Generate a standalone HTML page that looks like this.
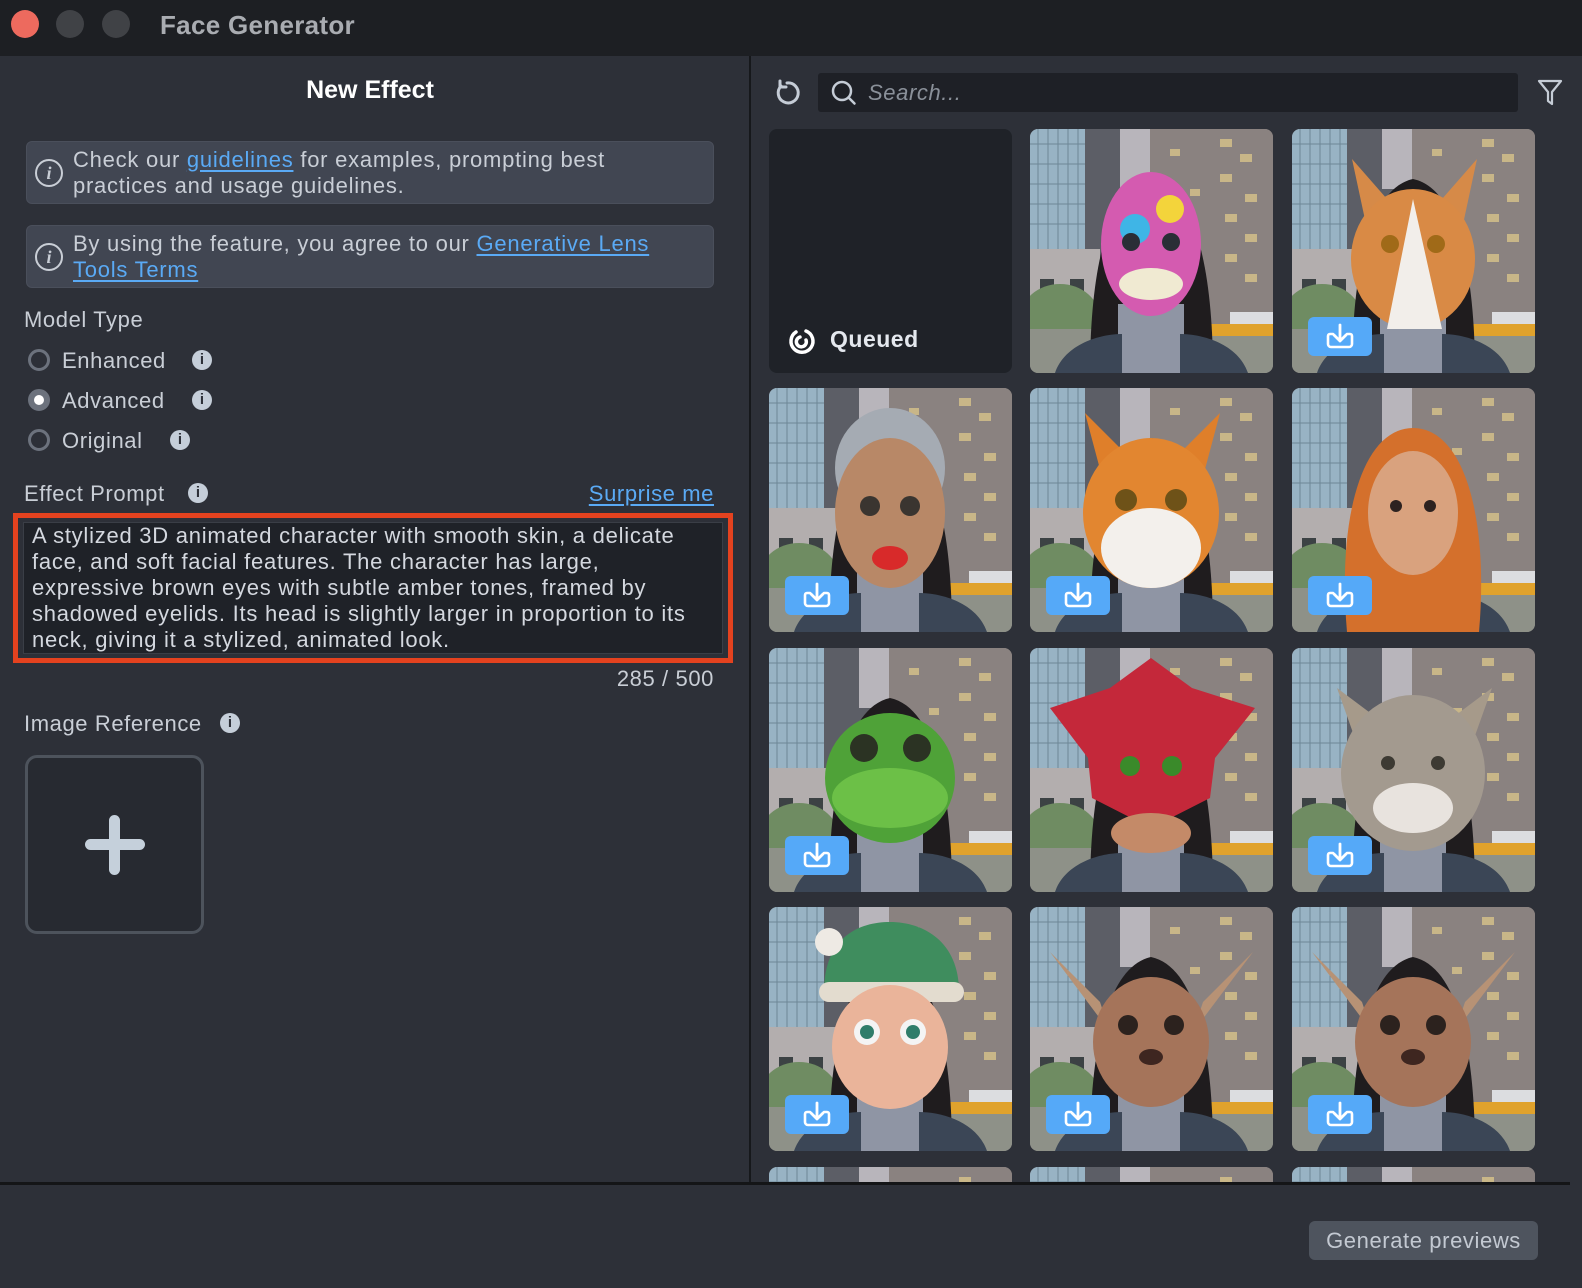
<!DOCTYPE html>
<html><head><meta charset="utf-8">
<style>
*{margin:0;padding:0;box-sizing:border-box}
html,body{width:1582px;height:1288px;overflow:hidden;background:#2d3038;font-family:"Liberation Sans",sans-serif;color:#c9ced6;position:relative}
.abs{position:absolute}
.title{left:0;top:0;width:1582px;height:56px;background:#1d1f23}
.dot{width:28px;height:28px;border-radius:50%;top:10px}
.left{left:0;top:56px;width:749px;height:1127px;background:#2d3038}
.div{left:749px;top:56px;width:2px;height:1127px;background:#16181b}
.hsep{left:0;top:1182px;width:1570px;height:3px;background:#141517}
.info{left:26px;width:688px;height:63px;background:#414652;border-radius:6px;border:1px solid #4a4f5b}
.info .t{position:absolute;left:46px;top:5px;font-size:22px;letter-spacing:0.75px;line-height:26px;color:#c9ced6;white-space:nowrap}
.info .i{position:absolute;left:8px;top:17px;width:28px;height:28px;border:2px solid #c9ced6;border-radius:50%;font-family:"Liberation Serif",serif;font-style:italic;font-weight:bold;font-size:18px;text-align:center;line-height:24px;color:#c9ced6}
a{color:#5aaaf5;text-decoration:underline;text-underline-offset:3px}
.lbl{font-size:22px;letter-spacing:0.6px;color:#c9ced6;white-space:nowrap}
.radio{width:22px;height:22px;border-radius:50%;border:3px solid #6c727d}
.ii{width:20px;height:20px;border-radius:50%;background:#c5ced9;color:#2d3038;font-weight:bold;font-size:15px;text-align:center;line-height:20px}
.tile{width:243px;height:244px;border-radius:8px;overflow:hidden}
.dl{position:absolute;left:16px;top:188px;width:64px;height:39px;background:#55a9f8;border-radius:6px}
</style></head><body>
<svg width="0" height="0" style="position:absolute">
<defs>
<symbol id="bg" viewBox="0 0 243 244">
<rect width="243" height="244" fill="#7d7a7a"/>
<rect x="0" y="0" width="65" height="120" fill="#98b3c4"/>
<g stroke="#6e8796" stroke-width="1">
<path d="M8 0V120M18 0V120M28 0V120M38 0V120M48 0V120M58 0V120M0 15H65M0 35H65M0 55H65M0 75H65M0 95H65"/>
</g>
<rect x="55" y="0" width="60" height="160" fill="#5c5e66"/>
<rect x="90" y="0" width="30" height="60" fill="#b8b5bb"/>
<rect x="120" y="0" width="123" height="200" fill="#8a8280"/>
<g fill="#d8c48a" opacity=".8">
<rect x="190" y="10" width="12" height="8"/><rect x="210" y="25" width="12" height="8"/><rect x="190" y="45" width="12" height="8"/><rect x="215" y="65" width="12" height="8"/><rect x="195" y="85" width="12" height="8"/><rect x="215" y="105" width="12" height="8"/><rect x="195" y="125" width="12" height="8"/><rect x="215" y="145" width="12" height="8"/><rect x="140" y="20" width="10" height="7"/><rect x="160" y="60" width="10" height="7"/><rect x="150" y="110" width="10" height="7"/>
</g>
<rect x="0" y="120" width="70" height="80" fill="#b3aeae"/>
<rect x="10" y="150" width="14" height="20" fill="#3c4244"/><rect x="40" y="150" width="14" height="20" fill="#3c4244"/>
<ellipse cx="30" cy="190" rx="40" ry="35" fill="#6f8c62"/>
<rect x="0" y="200" width="243" height="44" fill="#8e9188"/>
<rect x="170" y="195" width="73" height="12" fill="#e0a22c"/>
<rect x="200" y="183" width="43" height="12" fill="#dcdde0"/>
<path d="M60 244 C60 150 75 60 121 50 C168 60 183 150 183 244Z" fill="#1f1c1e"/>
<rect x="88" y="175" width="66" height="69" fill="#8f95a4"/>
<path d="M25 244 C35 215 70 205 92 205 L92 244Z M218 244 C208 215 173 205 150 205 L150 244Z" fill="#3b4656"/>
</symbol>
<symbol id="dlic" viewBox="0 0 64 39">
<path d="M25 17h-3a2 2 0 0 0-2 2v8a3 3 0 0 0 3 3h18a3 3 0 0 0 3-3v-8a2 2 0 0 0-2-2h-3" fill="none" stroke="#fff" stroke-width="2.6" stroke-linecap="round"/>
<path d="M32 8v15M26 18l6 6 6-6" fill="none" stroke="#fff" stroke-width="2.8" stroke-linecap="round" stroke-linejoin="round"/>
</symbol>
</defs>
</svg>

<div class="abs title"></div>
<div class="abs dot" style="left:11px;background:#ed6a5e"></div>
<div class="abs dot" style="left:56px;background:#404246"></div>
<div class="abs dot" style="left:102px;background:#404246"></div>
<div class="abs" style="left:160px;top:10px;font-size:26px;font-weight:bold;letter-spacing:0.3px;color:#a9acb1">Face Generator</div>

<div class="abs left"></div>
<div class="abs div"></div>

<div class="abs" style="left:0;top:76px;width:740px;text-align:center;font-size:25px;font-weight:bold;color:#fff">New Effect</div>

<div class="abs info" style="top:141px"><div class="i">i</div><div class="t">Check our <a>guidelines</a> for examples, prompting best<br>practices and usage guidelines.</div></div>
<div class="abs info" style="top:225px"><div class="i">i</div><div class="t">By using the feature, you agree to our <a>Generative Lens<br>Tools Terms</a></div></div>

<div class="abs lbl" style="left:24px;top:307px">Model Type</div>
<div class="abs radio" style="left:28px;top:349px"></div>
<div class="abs lbl" style="left:62px;top:348px">Enhanced</div>
<div class="abs ii" style="left:192px;top:350px">i</div>
<div class="abs radio" style="left:28px;top:389px;background:#fff;border:6px solid #6c727d"></div>
<div class="abs lbl" style="left:62px;top:388px">Advanced</div>
<div class="abs ii" style="left:192px;top:390px">i</div>
<div class="abs radio" style="left:28px;top:429px"></div>
<div class="abs lbl" style="left:62px;top:428px">Original</div>
<div class="abs ii" style="left:170px;top:430px">i</div>

<div class="abs lbl" style="left:24px;top:481px">Effect Prompt</div>
<div class="abs ii" style="left:188px;top:483px">i</div>
<div class="abs lbl" style="right:868px;top:481px"><a>Surprise me</a></div>

<div class="abs" style="left:13px;top:513px;width:720px;height:150px;border:5px solid #e4421f;background:#2d3038">
<div style="position:absolute;left:5px;top:4px;width:700px;height:132px;background:#1f2228;border:1px solid #3a3e46"></div>
<div style="position:absolute;left:14px;top:5px;font-size:22px;letter-spacing:0.75px;line-height:26px;color:#d4d8df;white-space:nowrap">A stylized 3D animated character with smooth skin, a delicate<br>face, and soft facial features. The character has large,<br>expressive brown eyes with subtle amber tones, framed by<br>shadowed eyelids. Its head is slightly larger in proportion to its<br>neck, giving it a stylized, animated look.</div>
</div>
<div class="abs lbl" style="right:868px;top:666px">285 / 500</div>

<div class="abs lbl" style="left:24px;top:711px">Image Reference</div>
<div class="abs ii" style="left:220px;top:713px">i</div>
<div class="abs" style="left:25px;top:755px;width:179px;height:179px;border:3px solid #4d535c;border-radius:12px;background:#272a31"></div>
<div class="abs" style="left:85px;top:839px;width:60px;height:11px;border-radius:6px;background:#c5d0db"></div>
<div class="abs" style="left:109px;top:815px;width:11px;height:60px;border-radius:6px;background:#c5d0db"></div>

<svg class="abs" style="left:772px;top:78px" width="30" height="30" viewBox="0 0 30 30"><path d="M9 8 A10 10 0 1 0 15 5" fill="none" stroke="#c5ccd6" stroke-width="3" stroke-linecap="round"/><path d="M8 3v6h6" fill="none" stroke="#c5ccd6" stroke-width="3" stroke-linecap="round" stroke-linejoin="round"/></svg>
<div class="abs" style="left:818px;top:73px;width:700px;height:39px;background:#1e2026;border-radius:3px"></div>
<svg class="abs" style="left:830px;top:79px" width="28" height="28" viewBox="0 0 28 28"><circle cx="12" cy="12" r="9" fill="none" stroke="#c5ccd6" stroke-width="2.5"/><path d="M18.5 18.5l6 6" stroke="#c5ccd6" stroke-width="2.5" stroke-linecap="round"/></svg>
<div class="abs" style="left:868px;top:80px;font-size:22px;letter-spacing:0.6px;font-style:italic;color:#8a9099">Search...</div>
<svg class="abs" style="left:1536px;top:78px" width="28" height="30" viewBox="0 0 28 30"><path d="M3 3h22l-9 11v12l-4-3v-9z" fill="none" stroke="#c5ccd6" stroke-width="2.2" stroke-linejoin="round"/></svg>

<div class="abs tile" style="left:769px;top:129px;background:#1f2228"></div>
<svg class="abs" style="left:786px;top:326px" width="30" height="30" viewBox="0 0 30 30"><path d="M10 6 A11 11 0 1 0 20 5" fill="none" stroke="#fff" stroke-width="3.5" stroke-linecap="round"/><path d="M14 11 A5 5 0 1 0 20 14" fill="none" stroke="#fff" stroke-width="3.5" stroke-linecap="round"/></svg>
<div class="abs" style="left:830px;top:326px;font-size:23px;font-weight:bold;letter-spacing:0.5px;color:#e4e8ee">Queued</div>

<div class="abs tile" style="left:1030px;top:129px"><svg width="243" height="244"><use href="#bg"/><ellipse cx="121" cy="115" rx="50" ry="72" fill="#d45bb0"/><ellipse cx="105" cy="100" rx="15" ry="15" fill="#3fb5e6"/><ellipse cx="140" cy="80" rx="14" ry="14" fill="#f3d43b"/><ellipse cx="121" cy="155" rx="32" ry="16" fill="#f0ead2"/><circle cx="101" cy="113" r="9" fill="#2a2e36"/><circle cx="141" cy="113" r="9" fill="#2a2e36"/></svg></div>
<div class="abs tile" style="left:1292px;top:129px"><svg width="243" height="244"><use href="#bg"/><path d="M60 30 L75 100 L170 100 L185 30 L150 70 L95 70Z" fill="#d68a48"/><ellipse cx="121" cy="130" rx="62" ry="70" fill="#d98a45"/><path d="M121 70 L95 200 L150 200Z" fill="#f2eeea"/><circle cx="98" cy="115" r="9" fill="#a06a18"/><circle cx="144" cy="115" r="9" fill="#a06a18"/></svg><div class="dl"><svg width="64" height="39"><use href="#dlic"/></svg></div></div>

<div class="abs tile" style="left:769px;top:388px"><svg width="243" height="244"><use href="#bg"/><ellipse cx="121" cy="80" rx="55" ry="60" fill="#a5abb3"/><ellipse cx="121" cy="125" rx="55" ry="75" fill="#b88867"/><circle cx="101" cy="118" r="10" fill="#3a3530"/><circle cx="141" cy="118" r="10" fill="#3a3530"/><ellipse cx="121" cy="170" rx="18" ry="12" fill="#d82a2a"/></svg><div class="dl"><svg width="64" height="39"><use href="#dlic"/></svg></div></div>
<div class="abs tile" style="left:1030px;top:388px"><svg width="243" height="244"><use href="#bg"/><path d="M55 25 L75 100 L170 100 L190 25 L150 65 L95 65Z" fill="#df7f2a"/><ellipse cx="121" cy="125" rx="68" ry="75" fill="#e28630"/><ellipse cx="121" cy="160" rx="50" ry="40" fill="#f3f0ec"/><circle cx="96" cy="112" r="11" fill="#6e5218"/><circle cx="146" cy="112" r="11" fill="#6e5218"/></svg><div class="dl"><svg width="64" height="39"><use href="#dlic"/></svg></div></div>
<div class="abs tile" style="left:1292px;top:388px"><svg width="243" height="244"><use href="#bg"/><path d="M55 244 C45 130 70 40 121 40 C172 40 197 130 187 244Z" fill="#d4702c"/><ellipse cx="121" cy="125" rx="45" ry="62" fill="#d9a27e"/><circle cx="104" cy="118" r="6" fill="#2d2220"/><circle cx="138" cy="118" r="6" fill="#2d2220"/></svg><div class="dl"><svg width="64" height="39"><use href="#dlic"/></svg></div></div>

<div class="abs tile" style="left:769px;top:648px"><svg width="243" height="244"><use href="#bg"/><ellipse cx="121" cy="130" rx="65" ry="65" fill="#4fa238"/><ellipse cx="121" cy="150" rx="58" ry="30" fill="#6cc047"/><circle cx="95" cy="100" r="14" fill="#2b3323"/><circle cx="148" cy="100" r="14" fill="#2b3323"/></svg><div class="dl"><svg width="64" height="39"><use href="#dlic"/></svg></div></div>
<div class="abs tile" style="left:1030px;top:648px"><svg width="243" height="244"><use href="#bg"/><path d="M20 60 L80 40 L121 10 L162 40 L225 60 L185 110 L180 150 L121 180 L62 150 L58 110Z" fill="#c4283a"/><ellipse cx="121" cy="185" rx="40" ry="20" fill="#c48a68"/><circle cx="100" cy="118" r="10" fill="#3a8a2a"/><circle cx="142" cy="118" r="10" fill="#3a8a2a"/></svg></div>
<div class="abs tile" style="left:1292px;top:648px"><svg width="243" height="244"><use href="#bg"/><path d="M45 40 L70 110 L175 110 L200 40 L160 70 L85 70Z" fill="#a69a8a"/><ellipse cx="121" cy="125" rx="72" ry="78" fill="#a39a8f"/><ellipse cx="121" cy="160" rx="40" ry="25" fill="#e8e3de"/><circle cx="96" cy="115" r="7" fill="#3d3a33"/><circle cx="146" cy="115" r="7" fill="#3d3a33"/></svg><div class="dl"><svg width="64" height="39"><use href="#dlic"/></svg></div></div>

<div class="abs tile" style="left:769px;top:907px"><svg width="243" height="244"><use href="#bg"/><path d="M55 85 C55 30 90 15 121 15 C155 15 190 35 190 85Z" fill="#3f8d5e"/><rect x="50" y="75" width="145" height="20" rx="10" fill="#e3dccf"/><circle cx="60" cy="35" r="14" fill="#eeeae4"/><ellipse cx="121" cy="140" rx="58" ry="62" fill="#eab49a"/><circle cx="98" cy="125" r="13" fill="#f4f4f4"/><circle cx="144" cy="125" r="13" fill="#f4f4f4"/><circle cx="98" cy="125" r="7" fill="#2f7d6a"/><circle cx="144" cy="125" r="7" fill="#2f7d6a"/></svg><div class="dl"><svg width="64" height="39"><use href="#dlic"/></svg></div></div>
<div class="abs tile" style="left:1030px;top:907px"><svg width="243" height="244"><use href="#bg"/><path d="M20 45 L70 95 L80 125Z M223 45 L173 95 L163 125Z" fill="#b79275"/><ellipse cx="121" cy="135" rx="58" ry="65" fill="#a5745a"/><circle cx="98" cy="118" r="10" fill="#2c221e"/><circle cx="144" cy="118" r="10" fill="#2c221e"/><ellipse cx="121" cy="150" rx="12" ry="8" fill="#3e2620"/></svg><div class="dl"><svg width="64" height="39"><use href="#dlic"/></svg></div></div>
<div class="abs tile" style="left:1292px;top:907px"><svg width="243" height="244"><use href="#bg"/><path d="M20 45 L70 95 L80 125Z M223 45 L173 95 L163 125Z" fill="#b79275"/><ellipse cx="121" cy="135" rx="58" ry="65" fill="#a5745a"/><circle cx="98" cy="118" r="10" fill="#2c221e"/><circle cx="144" cy="118" r="10" fill="#2c221e"/><ellipse cx="121" cy="150" rx="12" ry="8" fill="#3e2620"/></svg><div class="dl"><svg width="64" height="39"><use href="#dlic"/></svg></div></div>

<div class="abs" style="left:769px;top:1167px;width:243px;height:15px;overflow:hidden;border-radius:8px 8px 0 0"><svg width="243" height="244"><use href="#bg"/></svg></div>
<div class="abs" style="left:1030px;top:1167px;width:243px;height:15px;overflow:hidden;border-radius:8px 8px 0 0"><svg width="243" height="244"><use href="#bg"/></svg></div>
<div class="abs" style="left:1292px;top:1167px;width:243px;height:15px;overflow:hidden;border-radius:8px 8px 0 0"><svg width="243" height="244"><use href="#bg"/></svg></div>

<div class="abs hsep"></div>
<div class="abs" style="left:1309px;top:1221px;width:229px;height:39px;background:#4e545e;border-radius:6px;color:#c3c9d2;font-size:22px;letter-spacing:0.6px;text-align:center;line-height:39px;white-space:nowrap">Generate previews</div>
</body></html>
